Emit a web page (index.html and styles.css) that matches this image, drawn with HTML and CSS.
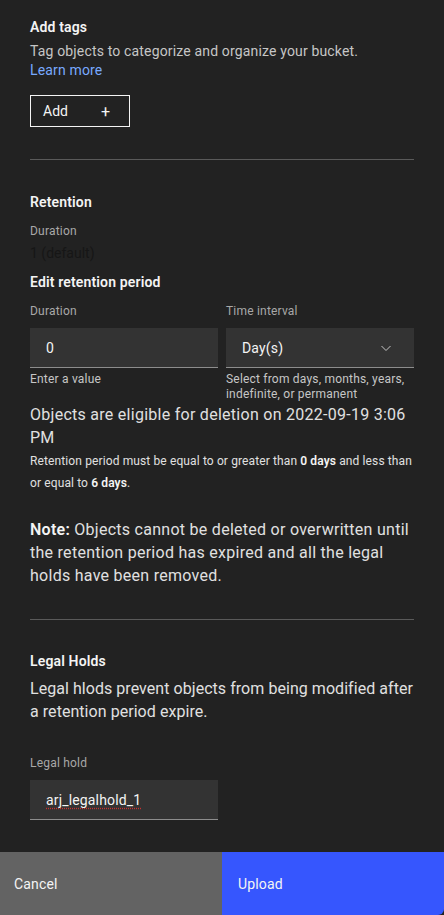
FILE: index.html
```html
<!DOCTYPE html>
<html lang="en">
<head>
<meta charset="utf-8">
<link rel="stylesheet" href="styles.css">
</head>
<body>
<div class="page">
  <main class="content">
    <section class="tags">
      <h2 class="heading">Add tags</h2>
      <p class="desc">Tag objects to categorize and organize your bucket.<br><a class="link" href="#">Learn more</a></p>
      <button class="add-btn"><span>Add</span><span class="plus">+</span></button>
    </section>
    <hr class="divider">
    <section class="retention">
      <h2 class="heading">Retention</h2>
      <div class="label small-gap">Duration</div>
      <div class="default-val">1 (default)</div>
      <h2 class="heading edit">Edit retention period</h2>
      <div class="fields">
        <div class="field">
          <div class="label">Duration</div>
          <div class="input">0</div>
          <div class="helper">Enter a value</div>
        </div>
        <div class="field">
          <div class="label">Time interval</div>
          <div class="input select">Day(s)
            <svg class="chev" width="16" height="16" viewBox="0 0 16 16"><path d="M3.5 6 L8 10.5 L12.5 6" fill="none" stroke="#c6c6c6" stroke-width="1"/></svg>
          </div>
          <div class="helper">Select from days, months, years, indefinite, or permanent</div>
        </div>
      </div>
      <p class="eligible">Objects are eligible for deletion on 2022-09-19 3:06 PM</p>
      <p class="rule">Retention period must be equal to or greater than <b>0 days</b> and less than or equal to <b>6 days</b>.</p>
      <p class="note"><b>Note:</b> Objects cannot be deleted or overwritten until the retention period has expired and all the legal holds have been removed.</p>
    </section>
    <hr class="divider second">
    <section class="legal">
      <h2 class="heading">Legal Holds</h2>
      <p class="legal-desc">Legal hlods prevent objects from being modified after a retention period expire.</p>
      <div class="label legal-label">Legal hold</div>
      <div class="input legal-input"><span class="spell">arj_legalhold_1</span></div>
    </section>
  </main>
  <footer class="actions">
    <button class="btn cancel">Cancel</button>
    <button class="btn upload">Upload</button>
  </footer>
</div>
</body>
</html>
```
FILE: styles.css
```css
* { box-sizing: border-box; }
html, body { margin: 0; padding: 0; }
body {
  background: #222222;
  color: #f4f4f4;
  font-family: Roboto, "Noto Sans", "Liberation Sans", sans-serif;
  -webkit-font-smoothing: antialiased;
}
.page {
  min-height: 915px;
  display: flex;
  flex-direction: column;
}
.content {
  flex: 1;
  padding: 18px 30px 0;
}
.heading {
  margin: 0;
  font-size: 14px;
  font-weight: 600;
  line-height: 18px;
  color: #f4f4f4;
  letter-spacing: 0.15px;
}
.desc {
  margin: 6px 0 0;
  font-size: 14px;
  line-height: 19px;
  color: #c6c6c6;
  letter-spacing: 0.16px;
}
.link { color: #78a9ff; text-decoration: none; }
.add-btn {
  margin-top: 15px;
  width: 100px;
  height: 32px;
  background: transparent;
  border: 1px solid #f4f4f4;
  color: #f4f4f4;
  font-family: inherit;
  font-size: 14px;
  display: flex;
  align-items: center;
  padding: 0 0 0 12px;
}
.plus { margin-left: 33px; font-size: 16px; }
.divider {
  border: 0;
  border-top: 1px solid #5a5a5a;
  margin: 32px 0 0;
}
.retention { padding-top: 33px; }
.label {
  font-size: 12px;
  line-height: 16px;
  color: #a8a8a8;
  letter-spacing: 0.2px;
}
.small-gap { margin-top: 12px; }
.default-val {
  margin-top: 5px;
  font-size: 14px;
  line-height: 18px;
  color: #161616;
}
.edit { margin-top: 11px; }
.fields {
  display: grid;
  grid-template-columns: 1fr 1fr;
  gap: 8px;
  margin-top: 12px;
}
.field .label { margin-bottom: 9px; }
.input {
  height: 40px;
  background: #333333;
  border-bottom: 1px solid #8d8d8d;
  display: flex;
  align-items: center;
  padding: 0 16px;
  font-size: 14px;
  color: #f4f4f4;
  letter-spacing: 0.16px;
}
.select { justify-content: space-between; }
.chev { margin-right: 4px; }
.helper {
  margin-top: 4px;
  font-size: 12px;
  line-height: 15px;
  color: #c6c6c6;
  letter-spacing: 0.2px;
}
.eligible {
  margin: 1px 0 0;
  font-size: 16px;
  line-height: 23px;
  color: #e0e0e0;
  letter-spacing: 0.27px;
}
.rule {
  margin: 1px 0 0;
  font-size: 12px;
  line-height: 22px;
  color: #e0e0e0;
  letter-spacing: 0.12px;
}
.rule b, .note b { font-weight: 600; color: #f4f4f4; }
.note {
  margin: 24px 0 0;
  font-size: 16px;
  line-height: 23px;
  color: #e0e0e0;
  letter-spacing: 0.27px;
}
.second { margin-top: 32px; }
.legal { padding-top: 32px; }
.legal-desc {
  margin: 7px 0 0;
  font-size: 16px;
  line-height: 23px;
  color: #e0e0e0;
  letter-spacing: 0.05px;
}
.legal-label { margin-top: 32px; }
.legal-input { width: 188px; margin-top: 9px; }
.spell {
  text-decoration: underline dotted #c83232;
  text-underline-offset: 3px;
}
.actions {
  display: grid;
  grid-template-columns: 1fr 1fr;
  height: 63px;
  margin-top: 32px;
}
.btn {
  border: 0;
  font-family: inherit;
  font-size: 14px;
  color: #f4f4f4;
  text-align: left;
  padding: 0 0 0 14px;
  display: flex;
  align-items: center;
  letter-spacing: 0.16px;
}
.cancel { background: #636363; }
.upload { background: #3656fe; padding-left: 16px; border-bottom-right-radius: 6px; }
```
